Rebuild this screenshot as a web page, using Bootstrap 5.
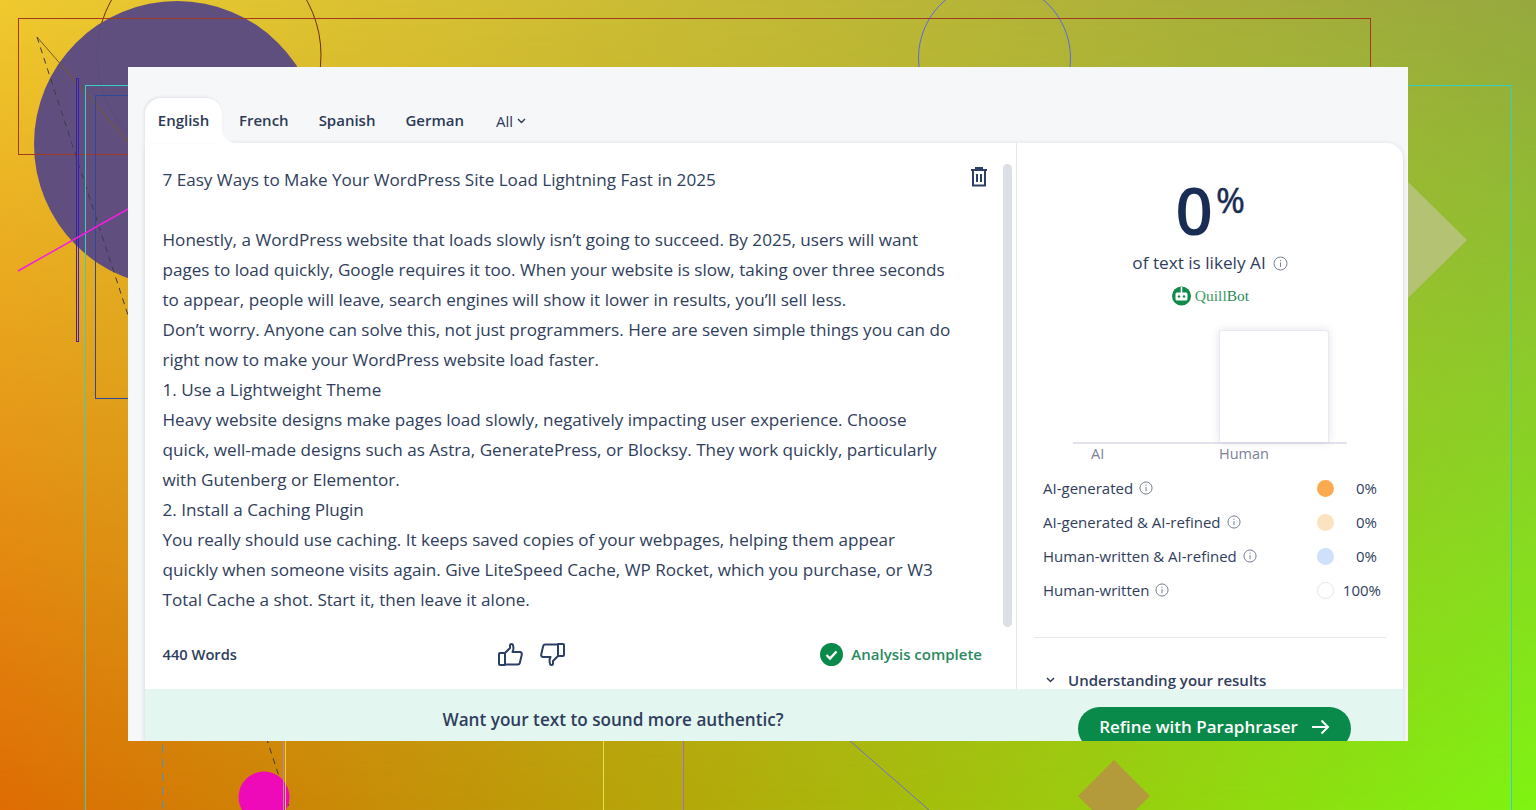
<!DOCTYPE html>
<html lang="en">
<head>
<meta charset="UTF-8">
<meta name="viewport" content="width=device-width, initial-scale=1.0">
<title>AI Detector</title>
<link href="https://cdn.jsdelivr.net/npm/bootstrap@5.3.0/dist/css/bootstrap.min.css" rel="stylesheet">
<style>
html, body { height: 100%; margin: 0; }
body { font-family: "Open Sans", "Liberation Sans", sans-serif; color: #2f3e5c; overflow: hidden; }
.stage { position: relative; width: 1536px; height: 810px; overflow: hidden; padding: 67px 0 0 128px; background: linear-gradient(to right, #df6c04, #7ff412); }
.stage::before { content: ""; position: absolute; inset: 0; background: linear-gradient(to right, #efc92e, #96a83e); -webkit-mask-image: linear-gradient(to bottom, #000, transparent); mask-image: linear-gradient(to bottom, #000, transparent); }
.deco { position: absolute; left: 0; top: 0; }
.shot { position: relative; width: 1280px; height: 674px; overflow: hidden; background: #f6f7f9; padding: 31px 5px 0 17px; }
.lang-tabs { height: 45px; border: 0; flex-wrap: nowrap; }
.lang-tabs .nav-link { border: 0; border-radius: 0; color: #2c3a56; font-size: 15px; font-weight: 600; padding: 0; height: 45px; line-height: 45px; margin-bottom: 0; }
.lang-tabs .nav-item:nth-child(1) { margin-right: 17px; }
.lang-tabs .nav-item:nth-child(2) { margin-right: 30px; }
.lang-tabs .nav-item:nth-child(3) { margin-right: 30px; }
.lang-tabs .nav-item:nth-child(4) { margin-right: 32px; }
.lang-tabs .nav-link.active { position: relative; z-index: 1; width: 77px; text-align: center; color: #2c3a56; background: #fff; border-radius: 16px 16px 0 0; box-shadow: -1px -1px 3px rgba(40,50,80,.1); }
.lang-tabs .nav-link.active::after { content: ""; position: absolute; left: 100%; bottom: 0; width: 13px; height: 13px; background: radial-gradient(circle at 100% 0, transparent 12.5px, #fff 13px); }
.lang-tabs .all-link { font-weight: 500; padding-top: 1px; }
.sheet { background: #fff; border-radius: 0 16px 0 0; box-shadow: 0 1px 5px rgba(40,50,80,.17); height: 600px; }
.panes { height: 546px; overflow: hidden; }
.editor { width: 872px; border-right: 1px solid #e4e6ea; position: relative; padding: 22px 0 0 17.5px; }
.doc-title { font-size: 17.1px; line-height: 30px; margin-bottom: 30px; }
.doc-body { font-size: 17.1px; line-height: 30px; margin: 0; height: 390px; }
.trash { position: absolute; left: 825px; top: 23px; }
.scroll-thumb { position: absolute; left: 858px; top: 21px; width: 9px; height: 463px; border-radius: 5px; background: #dcdfe6; }
.editor-foot { height: 30px; margin-top: 24px; padding-right: 34px; font-size: 14.7px; }
.word-count { width: 335px; font-weight: 600; }
.thumbs { width: 320px; gap: 17px; }
.done { color: #2a8a5e; font-weight: 600; font-size: 15px; }
.score-pane { width: 386px; padding: 0 17px 0 17px; position: relative; }
.score { height: 95px; padding-top: 34px; justify-content: center; color: #182c54; line-height: 1; }
.score-num { font-size: 66px; font-weight: 600; line-height: 64px; }
.score-pct { font-size: 35px; font-weight: 500; line-height: 34px; margin: 6px 0 0 3px; -webkit-text-stroke: .5px #182c54; }
.likely { font-size: 17.2px; line-height: 24px; margin-top: 13px; gap: 7px; }
.info-dot { flex: none; }
.brand { height: 20px; margin-top: 11px; gap: 3px; font-family: "Liberation Serif", serif; font-size: 15.5px; color: #3f9a68; }
.brand b { color: #2a8a58; }
.chart-wrap { position: relative; height: 141px; margin: 24px 0 0 39px; width: 274px; }
.chart-base { height: 114px; border-bottom: 2px solid #e3e3ee; padding-left: 146px; }
.chart-bar { width: 110px; height: 112px; background: #fff; border: 1px solid #e9e9f0; border-bottom: 0; border-radius: 3px 3px 0 0; box-shadow: 0 0 8px rgba(50,50,110,.14); }
.chart-labels { font-size: 14.5px; line-height: 20px; color: #7b8197; }
.chart-labels span:first-child { margin-left: 18px; width: 128px; }
.legend-row { height: 34px; font-size: 15px; padding-left: 9px; }
.legend-name { flex: 1; gap: 6px; }
.legend-dot { width: 17px; height: 17px; border-radius: 50%; }
.legend-val { width: 52px; text-align: right; font-weight: 500; padding-right: 9px; }
.legend-val.full { padding-right: 5px; }
.dot-a { background: #fcaa4f; }
.dot-b { background: #fce3c0; }
.dot-c { background: #cfe0fb; }
.dot-d { background: #fff; border: 1px solid #e5e6ea; }
.rule { height: 1px; background: #e6e6ea; margin-top: 30px; }
.understand { font-size: 15px; font-weight: 600; margin-top: 32px; padding-left: 12px; gap: 13px; line-height: 20px; }
.refine-bar { height: 54px; background: #e3f6f0; position: relative; }
.refine-text { position: absolute; left: 0; top: 19px; width: 936px; text-align: center; font-size: 17.15px; font-weight: 600; line-height: 24px; }
.refine-btn { position: absolute; left: 933px; top: 18px; width: 273px; height: 43px; border: 0; border-radius: 22px; background: #0a8a4a; color: #fff; font-size: 17px; font-weight: 600; gap: 13px; padding: 0 0 4px 0; }
.refine-btn:hover { background: #0a8a4a; color: #fff; }
</style>
</head>
<body>
<div class="stage">
  <!-- background decoration -->
  <svg class="deco" width="1536" height="810" fill="none">
    <circle cx="209" cy="55" r="112" stroke="#6a2c10"/>
    <circle cx="177" cy="144" r="143" fill="#5a4a82" stroke="none" opacity=".96"/>
    <circle cx="994.5" cy="58" r="76" stroke="#5a6ae0"/>
    <rect x="18.5" y="18.5" width="1352" height="136" stroke="#a03a20"/>
    <line x1="37" y1="37" x2="128" y2="142" stroke="#7a5a20"/>
    <line x1="37" y1="37" x2="290" y2="810" stroke="#3c3c48" stroke-dasharray="6 5"/>
    <rect x="76.5" y="78.5" width="2" height="263" stroke="#3a20b0"/>
    <rect x="85.5" y="85.5" width="1426" height="800" stroke="#35d0c0"/>
    <rect x="95.5" y="95.5" width="500" height="303" stroke="#2d4a9a"/>
    <line x1="18" y1="271" x2="128" y2="209" stroke="#f020e0" stroke-width="1.5"/>
    <polygon points="1467,240 1400,174 1400,306" fill="#b4c274"/>
    <circle cx="264" cy="797" r="25.5" fill="#ee0ab8"/>
    <line x1="162.5" y1="745" x2="162.5" y2="810" stroke="#4a90c8" stroke-dasharray="8 6"/>
    <line x1="283.5" y1="741" x2="283.5" y2="810" stroke="#c080b0"/>
    <line x1="285.5" y1="741" x2="285.5" y2="810" stroke="#e8d040"/>
    <line x1="603.5" y1="741" x2="603.5" y2="810" stroke="#e0e050"/>
    <line x1="683.5" y1="741" x2="683.5" y2="810" stroke="#9a70c0"/>
    <line x1="850" y1="741" x2="929" y2="810" stroke="#6a70d0"/>
    <polygon points="1114,760 1150,796 1114,832 1078,796" fill="#b39a3a"/>
  </svg>

  <div class="shot">
    <ul class="nav nav-tabs lang-tabs">
      <li class="nav-item"><a class="nav-link active" href="#">English</a></li>
      <li class="nav-item"><a class="nav-link" href="#">French</a></li>
      <li class="nav-item"><a class="nav-link" href="#">Spanish</a></li>
      <li class="nav-item"><a class="nav-link" href="#">German</a></li>
      <li class="nav-item"><a class="nav-link all-link d-flex align-items-center gap-1" href="#">All
        <svg width="9" height="6" viewBox="0 0 9 6" fill="none" stroke="#2c3a56" stroke-width="1.4"><path d="M1 1l3.5 3.5L8 1"/></svg></a></li>
    </ul>

    <div class="sheet">
      <div class="panes d-flex">
        <div class="editor">
          <div class="doc-title">7 Easy Ways to Make Your WordPress Site Load Lightning Fast in 2025</div>
          <p class="doc-body">Honestly, a WordPress website that loads slowly isn’t going to succeed. By 2025, users will want<br>
          pages to load quickly, Google requires it too. When your website is slow, taking over three seconds<br>
          to appear, people will leave, search engines will show it lower in results, you’ll sell less.<br>
          Don’t worry. Anyone can solve this, not just programmers. Here are seven simple things you can do<br>
          right now to make your WordPress website load faster.<br>
          1. Use a Lightweight Theme<br>
          Heavy website designs make pages load slowly, negatively impacting user experience. Choose<br>
          quick, well-made designs such as Astra, GeneratePress, or Blocksy. They work quickly, particularly<br>
          with Gutenberg or Elementor.<br>
          2. Install a Caching Plugin<br>
          You really should use caching. It keeps saved copies of your webpages, helping them appear<br>
          quickly when someone visits again. Give LiteSpeed Cache, WP Rocket, which you purchase, or W3<br>
          Total Cache a shot. Start it, then leave it alone.</p>
          <svg class="trash" width="18" height="21" viewBox="0 0 18 21" fill="none" stroke="#2c3f66" stroke-width="2"><path d="M1 4h16M6 4V2h6v2M3 4v15.5h12V4"/><path d="M7 8v8M11 8v8"/></svg>
          <div class="scroll-thumb"></div>
          <div class="editor-foot d-flex align-items-center">
            <div class="word-count">440 Words</div>
            <div class="thumbs d-flex align-items-center">
              <svg width="25" height="23" viewBox="0 0 25 23" fill="none" stroke="#2c3f66" stroke-width="2" stroke-linejoin="round"><path d="M7 10v12H2a1 1 0 0 1-1-1V11a1 1 0 0 1 1-1h5l5-5V2.500a1.500 1.500 0 0 1 3 0c.8 2.500.3 5-.5 6.500H22a2 2 0 0 1 1.800 2.500l-2 8.500a2 2 0 0 1-2 1.500H7"/></svg>
              <svg width="25" height="23" viewBox="0 0 25 23" fill="none" stroke="#2c3f66" stroke-width="2" stroke-linejoin="round"><path d="M18 13V1h5a1 1 0 0 1 1 1v10a1 1 0 0 1-1 1h-5l-5 5v2.500a1.500 1.500 0 0 1-3 0c-.8-2.500-.3-5 .5-6.500H3a2 2 0 0 1-1.800-2.500l2-8.500a2 2 0 0 1 2-1.500H18"/></svg>
            </div>
            <div class="done d-flex align-items-center ms-auto">
              <svg class="me-2" width="23" height="23" viewBox="0 0 23 23"><circle cx="11.500" cy="11.500" r="11.500" fill="#0a8a4a"/><path d="M6.500 12l3.500 3.500 6.500-7" fill="none" stroke="#fff" stroke-width="2.400"/></svg>
              <span>Analysis complete</span>
            </div>
          </div>
        </div>

        <div class="score-pane">
          <div class="score d-flex">
            <span class="score-num">0</span><span class="score-pct">%</span>
          </div>
          <div class="likely d-flex align-items-center justify-content-center">
            <span>of text is likely AI</span>
            <svg class="info-dot" width="15" height="15" viewBox="0 0 15 15" fill="none" stroke="#7b8197"><circle cx="7.500" cy="7.500" r="6.500"/><path d="M7.500 6.500v4.500M7.500 4v1.200"/></svg>
          </div>
          <div class="brand d-flex align-items-center justify-content-center">
            <svg width="21" height="20" viewBox="0 0 21 20"><circle cx="10.500" cy="10" r="9.500" fill="#0f8a4a"/><rect x="4.500" y="6.500" width="12" height="8" rx="1.500" fill="#fff"/><rect x="9.700" y="1" width="1.600" height="6" fill="#fff"/><circle cx="8" cy="10.500" r="1.200" fill="#0f8a4a"/><circle cx="13" cy="10.500" r="1.200" fill="#0f8a4a"/></svg>
            <span>Quill<b class="fw-normal">Bot</b></span>
          </div>
          <div class="chart-wrap">
            <div class="chart-base d-flex align-items-end"><div class="chart-bar"></div></div>
            <div class="chart-labels d-flex"><span>AI</span><span>Human</span></div>
          </div>
          <div class="legend-row d-flex align-items-center">
            <div class="legend-name d-flex align-items-center"><span>AI-generated</span><svg class="info-dot" width="14" height="14" viewBox="0 0 15 15" fill="none" stroke="#6b7388"><circle cx="7.500" cy="7.500" r="6.500"/><path d="M7.500 6.500v4.500M7.500 4v1.200"/></svg></div>
            <span class="legend-dot dot-a"></span><span class="legend-val">0%</span>
          </div>
          <div class="legend-row d-flex align-items-center">
            <div class="legend-name d-flex align-items-center"><span>AI-generated &amp; AI-refined</span><svg class="info-dot" width="14" height="14" viewBox="0 0 15 15" fill="none" stroke="#6b7388"><circle cx="7.500" cy="7.500" r="6.500"/><path d="M7.500 6.500v4.500M7.500 4v1.200"/></svg></div>
            <span class="legend-dot dot-b"></span><span class="legend-val">0%</span>
          </div>
          <div class="legend-row d-flex align-items-center">
            <div class="legend-name d-flex align-items-center"><span>Human-written &amp; AI-refined</span><svg class="info-dot" width="14" height="14" viewBox="0 0 15 15" fill="none" stroke="#6b7388"><circle cx="7.500" cy="7.500" r="6.500"/><path d="M7.500 6.500v4.500M7.500 4v1.200"/></svg></div>
            <span class="legend-dot dot-c"></span><span class="legend-val">0%</span>
          </div>
          <div class="legend-row d-flex align-items-center">
            <div class="legend-name d-flex align-items-center"><span>Human-written</span><svg class="info-dot" width="14" height="14" viewBox="0 0 15 15" fill="none" stroke="#6b7388"><circle cx="7.500" cy="7.500" r="6.500"/><path d="M7.500 6.500v4.500M7.500 4v1.200"/></svg></div>
            <span class="legend-dot dot-d"></span><span class="legend-val full">100%</span>
          </div>
          <div class="rule"></div>
          <div class="understand d-flex align-items-center">
            <svg width="9" height="6" viewBox="0 0 9 6" fill="none" stroke="#2c3a56" stroke-width="1.500"><path d="M1 1l3.500 3.500L8 1"/></svg>
            <span>Understanding your results</span>
          </div>
        </div>
      </div>

      <div class="refine-bar">
        <div class="refine-text">Want your text to sound more authentic?</div>
        <button type="button" class="btn refine-btn d-flex align-items-center justify-content-center">
          <span>Refine with Paraphraser</span>
          <svg width="19" height="16" viewBox="0 0 19 16" fill="none" stroke="#fff" stroke-width="2"><path d="M1 8h16M10.500 1.500L17 8l-6.500 6.500"/></svg>
        </button>
      </div>
    </div>
  </div>
</div>
<script src="https://cdn.jsdelivr.net/npm/bootstrap@5.3.0/dist/js/bootstrap.bundle.min.js"></script>
</body>
</html>
